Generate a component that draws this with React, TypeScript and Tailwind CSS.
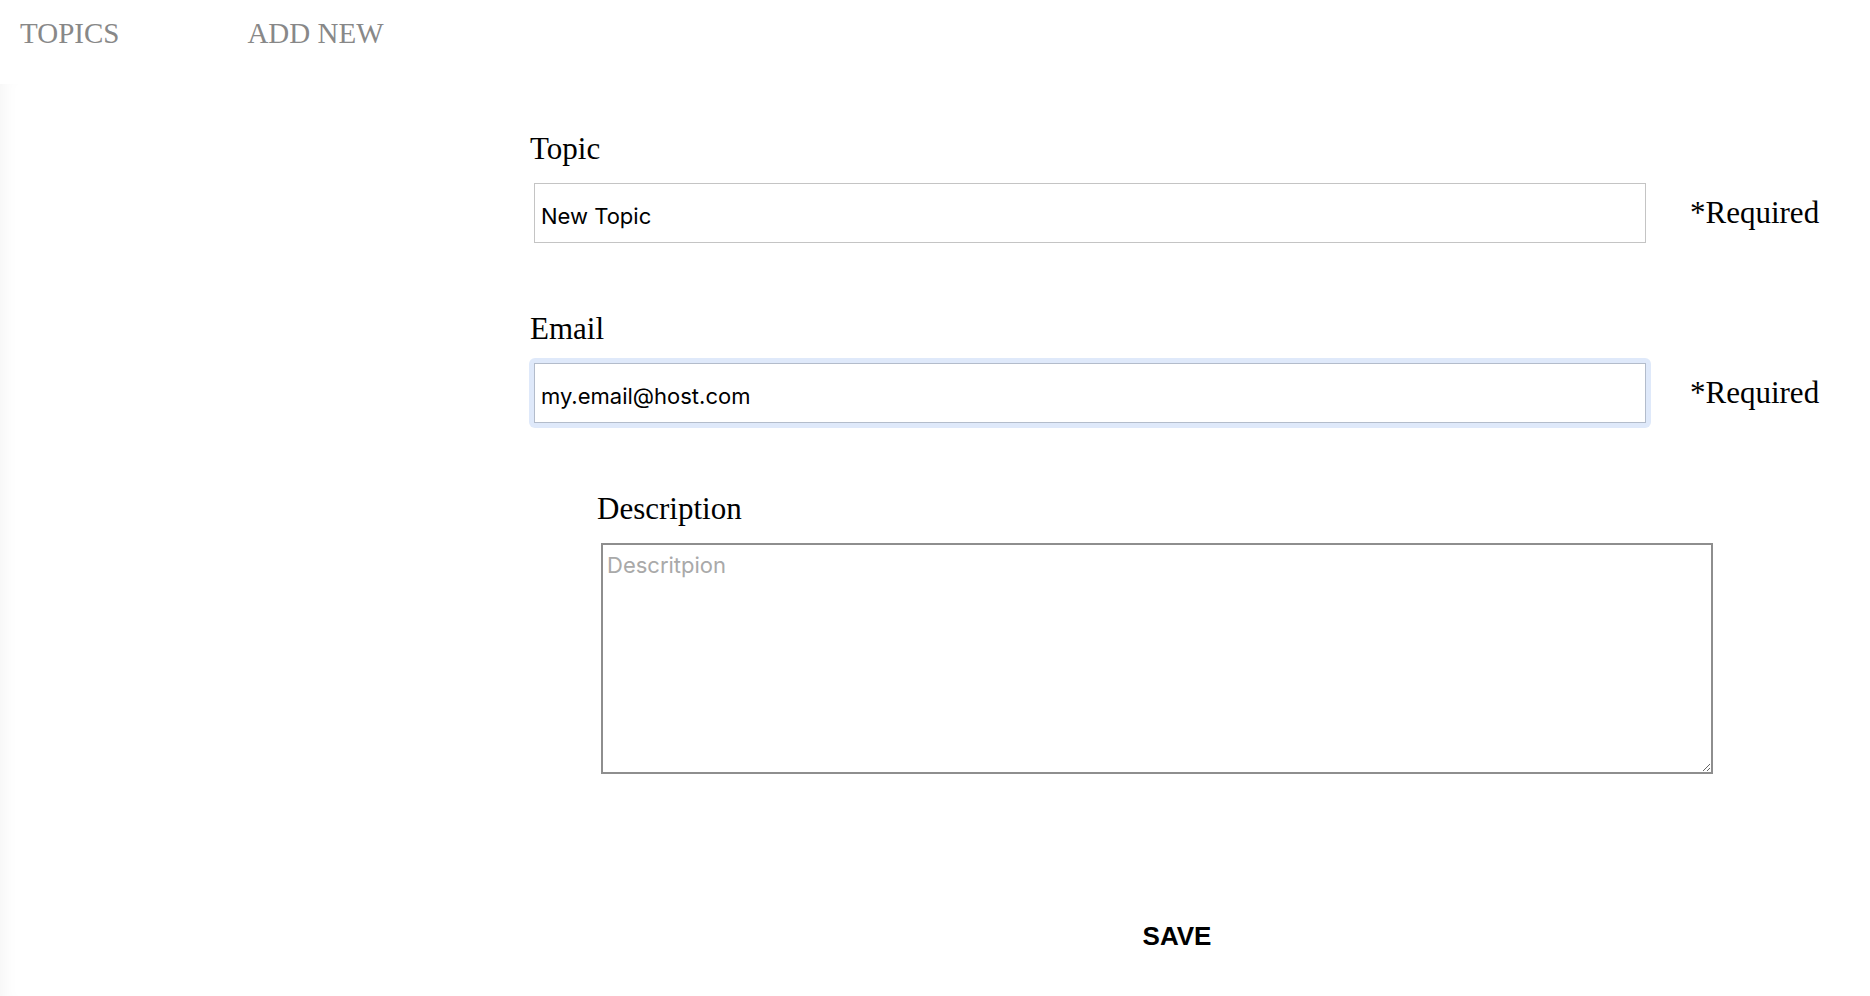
import { useState } from 'react';

const serif = 'font-["Liberation_Serif",serif]';

function Field({
  label,
  value,
  onChange,
  focused,
}: {
  label: string;
  value: string;
  onChange: (v: string) => void;
  focused?: boolean;
}) {
  return (
    <div className="flex flex-col">
      <label className={`${serif} text-[31px] leading-none text-black pl-px`}>{label}</label>
      <div className="flex items-center mt-[14px]">
        <div className={`w-[1122px] p-[5px] rounded-[6px] ${focused ? 'bg-[#dfe9fa]' : ''}`}>
          <input
            type="text"
            value={value}
            onChange={(e) => onChange(e.target.value)}
            className={`block w-full h-[60px] bg-white border px-[6px] pt-[5px] font-["Inter",sans-serif] text-[22px] text-black outline-none ${
              focused ? 'border-[#b3bccb]' : 'border-[#c4c4c4]'
            }`}
          />
        </div>
        <span className={`${serif} text-[31px] leading-none text-black ml-[39px] -mt-[2px]`}>*Required</span>
      </div>
    </div>
  );
}

export default function App() {
  const [topic, setTopic] = useState('New Topic');
  const [email, setEmail] = useState('my.email@host.com');
  const [description, setDescription] = useState('');

  return (
    <div className="min-h-screen flex flex-col bg-white">
      {/* Nav */}
      <nav className={`h-[84px] flex items-start gap-[128px] pl-[20px] pt-[19px] ${serif} text-[29px] leading-none text-[#888888]`}>
        <a href="#">TOPICS</a>
        <a href="#">ADD NEW</a>
      </nav>

      {/* Form area */}
      <main className="flex-1 min-h-[912px] shadow-[inset_16px_0_18px_-14px_rgba(0,0,0,0.05)]">
        <div className="ml-[529px] w-[1296px] pt-[49px] flex flex-col">
          <Field label="Topic" value={topic} onChange={setTopic} />
          <div className="mt-[65px]">
            <Field label="Email" value={email} onChange={setEmail} focused />
          </div>

          <div className="mt-[65px] ml-[67px] flex flex-col">
            <label className={`${serif} text-[31px] leading-none text-black pl-px`}>Description</label>
            <div className="w-[1122px] p-[5px] mt-[14px]">
              <textarea
                value={description}
                onChange={(e) => setDescription(e.target.value)}
                placeholder="Descritpion"
                className='block w-full h-[231px] border-2 border-[#8e8e8e] pl-[4px] pt-[8px] font-["Inter",sans-serif] text-[22px] leading-[24px] text-black placeholder-[#a9a9a9] outline-none resize'
              />
            </div>
          </div>

          <div className="flex justify-center mt-[144px]">
            <button className='font-["Liberation_Sans",Arial,sans-serif] font-bold text-[26px] leading-none text-black'>
              SAVE
            </button>
          </div>
        </div>
      </main>
    </div>
  );
}
